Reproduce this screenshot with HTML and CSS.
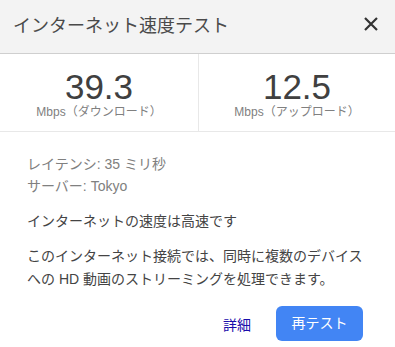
FILE: index.html
```html
<!DOCTYPE html>
<html lang="ja">
<head>
<meta charset="utf-8">
<link rel="stylesheet" href="styles.css">
</head>
<body>
<div class="dialog">
  <div class="header">
    <div class="title">インターネット速度テスト</div>
    <svg class="close" width="14" height="14" viewBox="0 0 14 14"><path d="M1 1L13 13M13 1L1 13" stroke="#333" stroke-width="2.2" fill="none"/></svg>
  </div>
  <div class="stats">
    <div class="stat">
      <div class="num">39.3</div>
      <div class="unit">Mbps（ダウンロード）</div>
    </div>
    <div class="stat">
      <div class="num">12.5</div>
      <div class="unit">Mbps（アップロード）</div>
    </div>
  </div>
  <div class="body">
    <div class="meta">
      <div>レイテンシ: 35 ミリ秒</div>
      <div>サーバー: Tokyo</div>
    </div>
    <p class="verdict">インターネットの速度は高速です</p>
    <p class="desc">このインターネット接続では、同時に複数のデバイスへの HD 動画のストリーミングを処理できます。</p>
  </div>
  <div class="actions">
    <span class="link">詳細</span>
    <span class="btn">再テスト</span>
  </div>
</div>
</body>
</html>
```
FILE: styles.css
```css
html, body {
  margin: 0;
  padding: 0;
  background: #fff;
}
body {
  font-family: "Liberation Sans", "Noto Sans CJK JP", sans-serif;
  color: #444;
}
.dialog {
  width: 395px;
}
.header {
  height: 54px;
  background: #f3f3f3;
  border-bottom: 1px solid #cfcfcf;
  display: flex;
  align-items: center;
  justify-content: space-between;
  padding: 0 17px 2px 13px;
  box-sizing: border-box;
}
.title {
  font-size: 18px;
  color: #4a4a4a;
  line-height: 22px;
}
.close {
  display: block;
  margin-top: -4px;
}
.stats {
  display: grid;
  grid-template-columns: 198px 1fr;
  height: 78px;
  box-sizing: border-box;
  border-bottom: 1px solid #e8e8e8;
}
.stat {
  text-align: center;
  padding-top: 14px;
}
.stat + .stat {
  border-left: 1px solid #e8e8e8;
}
.num {
  font-size: 35px;
  line-height: 38px;
  color: #404040;
}
.unit {
  font-size: 12px;
  line-height: 12px;
  color: #808080;
}
.body {
  padding: 21px 27px 0 27px;
  font-size: 14px;
  line-height: 22px;
}
.meta {
  color: #808080;
}
.verdict {
  margin: 13px 0 0;
  color: #444;
}
.desc {
  margin: 13px 0 0;
  color: #444;
  line-height: 23px;
}
.actions {
  display: flex;
  justify-content: flex-end;
  align-items: center;
  gap: 25px;
  padding: 15px 32px 0 0;
}
.link {
  font-size: 14px;
  color: #1a0dab;
}
.btn {
  display: block;
  width: 87px;
  height: 35px;
  line-height: 35px;
  text-align: center;
  background: #4285f4;
  color: #fff;
  font-size: 14px;
  border-radius: 6px;
}
```
